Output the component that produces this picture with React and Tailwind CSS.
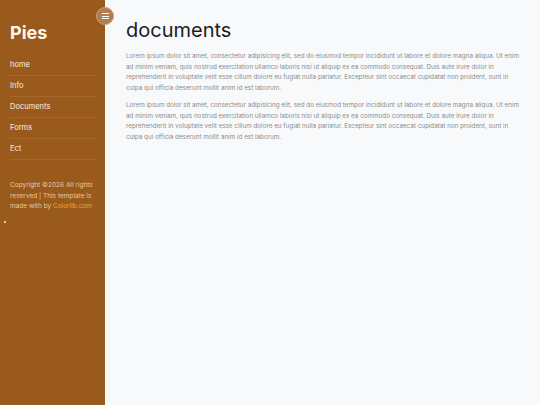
import React from "react";

const navItems = ["home", "Info", "Documents", "Forms", "Ect"];

const lorem =
  "Lorem ipsum dolor sit amet, consectetur adipisicing elit, sed do eiusmod tempor incididunt ut labore et dolore magna aliqua. Ut enim ad minim veniam, quis nostrud exercitation ullamco laboris nisi ut aliquip ex ea commodo consequat. Duis aute irure dolor in reprehenderit in voluptate velit esse cillum dolore eu fugiat nulla pariatur. Excepteur sint occaecat cupidatat non proident, sunt in culpa qui officia deserunt mollit anim id est laborum.";

const App = () => {
  return (
    <div
      className="flex h-[405px] w-[540px] overflow-hidden bg-[#f8f9fa]"
      style={{ fontFamily: "Inter, 'Noto Sans', sans-serif" }}
    >
      {/* sidebar */}
      <nav className="relative flex w-[105px] shrink-0 flex-col bg-[#9a5a1c] px-[10px] pt-[21px]">
        <button className="absolute right-[-9px] top-[7px] flex h-[18px] w-[18px] items-center justify-center rounded-full border border-[#c99b73] bg-[#b27d4f]">
          <span className="flex w-[7px] flex-col gap-[1.5px]">
            <span className="h-[1px] w-full bg-white" />
            <span className="h-[1px] w-full bg-white" />
            <span className="h-[1px] w-full bg-white" />
          </span>
        </button>

        <h1 className="text-[18px] font-bold leading-[24px] text-[#fff8ee]">Pies</h1>

        <ul className="mt-[10px] w-[86px]">
          {navItems.map((item) => (
            <li
              key={item}
              className="flex h-[21px] items-center border-b border-[#a4672c] text-[7.5px] text-[#fbeee0]"
            >
              {item}
            </li>
          ))}
        </ul>

        <p className="mt-[20px] text-[6.5px] leading-[10.5px] text-[#e9c9a3]">
          Copyright ©2026 All rights reserved | This template is made with by{" "}
          <span className="text-[#e8a83a]">Colorlib.com</span>
        </p>

        <span className="ml-[-6px] mt-[9px] h-[2px] w-[2px] bg-[#f3c393]" />
      </nav>

      {/* main content */}
      <main className="flex-1 pl-[21px] pr-[16px] pt-[18px]">
        <h2 className="text-[20px] font-normal leading-[24px] text-[#1c1c1c]">documents</h2>
        <p className="mt-[9px] text-[6.3px] leading-[10.5px] text-[#8c8c8c]">{lorem}</p>
        <p className="mt-[7px] text-[6.3px] leading-[10.5px] text-[#8c8c8c]">{lorem}</p>
      </main>
    </div>
  );
};

export default App;
